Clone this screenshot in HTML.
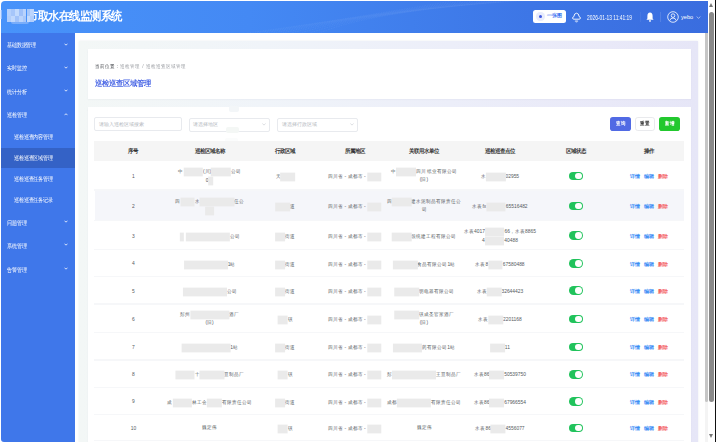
<!DOCTYPE html>
<html><head><meta charset="utf-8">
<style>
*{box-sizing:border-box;margin:0;padding:0}
html,body{width:716px;height:442px;overflow:hidden;background:#fff;font-family:"Liberation Sans",sans-serif}
.a{position:absolute}
#hdr{left:1px;top:1px;width:706.9px;height:31.5px;border-top-left-radius:4px;background:linear-gradient(90deg,#4893fa 0%,#4489f4 35%,#3d76e6 75%,#3a6ddf 100%)}
#title{left:27.3px;top:9.4px;font-size:11px;letter-spacing:-0.5px;transform:scaleY(1.06);transform-origin:0 50%;font-weight:bold;color:#fff;white-space:nowrap}
#side{left:0.7px;top:32.5px;width:73.9px;height:409.5px;background:#3f77ea;border-bottom-left-radius:3px}
.mi{position:absolute;left:7px;font-size:4.9px;color:#fff;white-space:nowrap;line-height:6px;margin-top:0.5px;transform:scale(.97,1.15);transform-origin:0 50%}
.si{position:absolute;left:14.3px;font-size:4.9px;color:#fff;white-space:nowrap;line-height:6px;margin-top:0.5px;transform:scale(.97,1.15);transform-origin:0 50%}
.chev{position:absolute;left:64.5px;width:2.3px;height:2.3px;border-right:0.55px solid rgba(255,255,255,.9);border-bottom:0.55px solid rgba(255,255,255,.9);transform:rotate(45deg)}
.chevu{position:absolute;left:64.5px;width:2.3px;height:2.3px;border-left:0.55px solid rgba(255,255,255,.9);border-top:0.55px solid rgba(255,255,255,.9);transform:rotate(45deg)}
#outer{left:79px;top:41px;width:619px;height:410px;background:linear-gradient(90deg,#f3f7f6 0%,#f0f4f9 30%,#eceef9 60%,#e9e9f8 85%,#e6e6f7 100%);box-shadow:0 0 2px rgba(210,215,225,.45)}
.card{position:absolute;background:#fff;left:8.6px;width:603.4px;box-shadow:0 0.6px 1.5px rgba(120,120,160,.12)}
.th{position:absolute;font-size:5.3px;font-weight:bold;color:#333;white-space:nowrap;transform:translateX(-50%) scaleY(1.1);line-height:6px}
.td{position:absolute;font-size:4.9px;color:#555a60;white-space:nowrap;transform:translateX(-50%) scaleY(1.1);line-height:6px;text-align:center}
.sw{position:absolute;left:568.6px;width:14.3px;height:8.8px;border-radius:5px;background:#21c35c}
.sw::after{content:"";position:absolute;right:1px;top:1px;width:6.8px;height:6.8px;border-radius:50%;background:#fff}
.act{position:absolute;font-size:5.2px;font-weight:bold;white-space:nowrap;line-height:6px;margin-top:0.8px}
.line{position:absolute;left:94.3px;width:589.4px;height:1.4px;background:#f6f7f9}
.btx{top:121.3px;font-size:4.9px;font-weight:bold;white-space:nowrap;line-height:6px;transform:scaleY(1.12);transform-origin:0 50%}
.blk{display:inline-block;background:#eaeaea;height:8px;vertical-align:middle;filter:blur(0.6px)}
</style></head><body>
<div id="hdr" class="a"></div>
<svg class="a" style="left:0;top:1px" width="707" height="31.5" viewBox="0 1 707 31.5"><g fill="none" stroke="rgba(255,255,255,.07)" stroke-width="0.7" stroke-dasharray="0.7 1.9" stroke-linecap="round"><path d="M240.0 34 Q330.0 22.0 470.0 -2"/><path d="M249.6 34 Q336.4 20.1 482.8 -2"/><path d="M259.2 34 Q342.8 18.2 495.6 -2"/><path d="M268.8 34 Q349.2 16.2 508.4 -2"/><path d="M278.4 34 Q355.6 14.3 521.2 -2"/><path d="M288.0 34 Q362.0 12.4 534.0 -2"/><path d="M297.6 34 Q368.4 10.5 546.8 -2"/><path d="M307.2 34 Q374.8 8.6 559.6 -2"/><path d="M316.8 34 Q381.2 6.6 572.4 -2"/></g></svg>
<div id="title" class="a">市取水在线监测系统</div>
<div class="a" style="left:0;top:0;width:60px;height:32px;filter:blur(0.45px)"><div class="a" style="left:7.20px;top:9.4px;width:3.86px;height:6.2px;background:#b4d0fc"></div><div class="a" style="left:7.20px;top:15.6px;width:3.86px;height:6.2px;background:#b0cdfb"></div><div class="a" style="left:11.06px;top:9.4px;width:3.86px;height:6.2px;background:#a6c6fa"></div><div class="a" style="left:11.06px;top:15.6px;width:3.86px;height:6.2px;background:#c0d8fd"></div><div class="a" style="left:14.92px;top:9.4px;width:3.86px;height:6.2px;background:#c2dafd"></div><div class="a" style="left:14.92px;top:15.6px;width:3.86px;height:6.2px;background:#a2c3f9"></div><div class="a" style="left:18.78px;top:9.4px;width:3.86px;height:6.2px;background:#9ec0f9"></div><div class="a" style="left:18.78px;top:15.6px;width:3.86px;height:6.2px;background:#bad4fc"></div><div class="a" style="left:22.64px;top:9.4px;width:3.86px;height:6.2px;background:#b9d3fc"></div><div class="a" style="left:22.64px;top:15.6px;width:3.86px;height:6.2px;background:#a9c8fa"></div><div class="a" style="left:26.50px;top:9.4px;width:3.86px;height:6.2px;background:#a8c8fa"></div><div class="a" style="left:26.50px;top:15.6px;width:3.86px;height:6.2px;background:#c4dbfd"></div><div class="a" style="left:30.36px;top:9.4px;width:3.86px;height:6.2px;background:#bcd5fd"></div><div class="a" style="left:30.36px;top:15.6px;width:3.86px;height:6.2px;background:#b2cefb"></div><div class="a" style="left:11px;top:21.5px;width:18px;height:2px;border-radius:0 0 9px 9px;background:rgba(170,200,250,.5)"></div></div>
<div class="a" style="left:0;top:10px;width:2px;height:9px;background:rgba(190,212,255,.6)"></div>

<!-- header right -->
<div class="a" style="left:533px;top:10px;width:32.6px;height:13px;background:#fff;border-radius:2.5px"></div>
<div class="a" style="left:536.3px;top:12.3px;width:8.4px;height:8.4px;border-radius:50%;background:#e8ecfc"></div>
<div class="a" style="left:538.8px;top:14.8px;width:3.4px;height:3.4px;border-radius:50%;background:#4058e0"></div>
<div class="a" style="left:547.4px;top:13px;font-size:4.9px;font-weight:bold;color:#3470f0;white-space:nowrap;line-height:6px">一张图</div>
<svg class="a" style="left:572px;top:12px" width="9" height="11" viewBox="0 0 9 11"><path d="M1.8 7.2 Q0.6 7.2 0.6 6 Q0.6 4.9 1.8 4.7 Q2.2 1.2 4.5 1.2 Q6.8 1.2 7.2 4.7 Q8.4 4.9 8.4 6 Q8.4 7.2 7.2 7.2 Z" fill="none" stroke="#fff" stroke-width="0.9"/><path d="M3.4 8.3 v1.8 M4.5 8.3 v2.2 M5.6 8.3 v1.8" stroke="#fff" stroke-width="0.55"/></svg>
<div class="a" style="left:586.7px;top:14px;font-size:7.4px;color:#fff;white-space:nowrap;line-height:8px;transform:scaleX(.66);transform-origin:0 0">2026-01-13 11:41:19</div>
<div class="a" style="left:640px;top:12px;width:0.6px;height:10px;background:rgba(255,255,255,.06)"></div>
<svg class="a" style="left:645.5px;top:12px" width="8" height="10" viewBox="0 0 8 10"><path d="M4 0.6 Q6.6 0.8 6.6 4 L6.6 6.6 L7.6 7.8 L0.4 7.8 L1.4 6.6 L1.4 4 Q1.4 0.8 4 0.6 Z" fill="#fff"/><circle cx="4" cy="8.9" r="0.9" fill="#fff"/></svg>
<div class="a" style="left:660px;top:12px;width:0.6px;height:10px;background:rgba(255,255,255,.13)"></div>
<svg class="a" style="left:666.5px;top:11px" width="12" height="12" viewBox="0 0 12 12"><circle cx="6" cy="6" r="5.3" fill="none" stroke="#fff" stroke-width="0.8"/><circle cx="6" cy="4.6" r="1.8" fill="none" stroke="#fff" stroke-width="0.8"/><path d="M2.8 9.6 Q3.4 7 6 7 Q8.6 7 9.2 9.6" fill="none" stroke="#fff" stroke-width="0.8"/></svg>
<div class="a" style="left:681px;top:14px;font-size:5.6px;color:#fff;white-space:nowrap;line-height:7px">yebo</div>
<svg class="a" style="left:696px;top:15.5px" width="5" height="3" viewBox="0 0 5 3"><polyline points="0.6,0.6 2.5,2.3 4.4,0.6" fill="none" stroke="rgba(255,255,255,.85)" stroke-width="0.6"/></svg>

<!-- scrollbars -->
<div class="a" style="left:704.6px;top:32.5px;width:3.5px;height:409.5px;background:#f4f4f4"></div>
<div class="a" style="left:704.6px;top:32.5px;width:3.5px;height:369px;background:#c6c6c6;border-radius:0 0 1.5px 1.5px"></div>
<div class="a" style="left:708px;top:0;width:8px;height:442px;background:#fff"></div>
<div class="a" style="left:709.2px;top:11.9px;width:5.2px;height:390.6px;background:#8a8a8a;border-radius:2.6px"></div>
<div class="a" style="left:709.3px;top:3.2px;width:0;height:0;border-left:2.6px solid transparent;border-right:2.6px solid transparent;border-bottom:4.4px solid #777"></div>
<div class="a" style="left:709.3px;top:434.3px;width:0;height:0;border-left:2.6px solid transparent;border-right:2.6px solid transparent;border-top:4.4px solid #777"></div>
<div class="a" style="left:715.2px;top:0;width:0.8px;height:442px;background:#111"></div>
<!-- sidebar -->
<div id="side" class="a">
</div>
<div class="a" style="left:0.7px;top:147.8px;width:73.9px;height:20.3px;background:#3462c6"></div>
<div class="mi" style="top:42.5px">基础数据管理</div><svg class="a" style="left:64.3px;top:42.5px" width="4" height="3" viewBox="0 0 4 3"><polyline points="0.5,0.7 2,2.2 3.5,0.7" fill="none" stroke="#fff" stroke-width="0.8"/></svg>
<div class="mi" style="top:65.6px">实时监控</div><svg class="a" style="left:64.3px;top:65.9px" width="4" height="3" viewBox="0 0 4 3"><polyline points="0.5,0.7 2,2.2 3.5,0.7" fill="none" stroke="#fff" stroke-width="0.8"/></svg>
<div class="mi" style="top:89.5px">统计分析</div><svg class="a" style="left:64.3px;top:89.3px" width="4" height="3" viewBox="0 0 4 3"><polyline points="0.5,0.7 2,2.2 3.5,0.7" fill="none" stroke="#fff" stroke-width="0.8"/></svg>
<div class="mi" style="top:112.8px">巡检管理</div><svg class="a" style="left:64.3px;top:113.3px" width="4" height="3" viewBox="0 0 4 3"><polyline points="0.5,2.2 2,0.7 3.5,2.2" fill="none" stroke="#fff" stroke-width="0.8"/></svg>
<div class="si" style="top:134.4px">巡检巡查内容管理</div>
<div class="si" style="top:155.4px">巡检巡查区域管理</div>
<div class="si" style="top:176.4px">巡检巡查任务管理</div>
<div class="si" style="top:197.4px">巡检巡查任务记录</div>
<div class="mi" style="top:220.5px">问题管理</div><svg class="a" style="left:64.3px;top:220.0px" width="4" height="3" viewBox="0 0 4 3"><polyline points="0.5,0.7 2,2.2 3.5,0.7" fill="none" stroke="#fff" stroke-width="0.8"/></svg>
<div class="mi" style="top:243.4px">系统管理</div><svg class="a" style="left:64.3px;top:243.4px" width="4" height="3" viewBox="0 0 4 3"><polyline points="0.5,0.7 2,2.2 3.5,0.7" fill="none" stroke="#fff" stroke-width="0.8"/></svg>
<div class="mi" style="top:267.3px">告警管理</div><svg class="a" style="left:64.3px;top:266.8px" width="4" height="3" viewBox="0 0 4 3"><polyline points="0.5,0.7 2,2.2 3.5,0.7" fill="none" stroke="#fff" stroke-width="0.8"/></svg>

<!-- content -->
<div id="outer" class="a">
  <div class="card" style="top:8.4px;height:49.2px"></div>
  <div class="card" style="top:66.2px;height:400px"></div>
</div>

<div class="a" style="left:95px;top:63.5px;font-size:4.83px;color:#4a4d52;white-space:nowrap;line-height:6px;transform:scale(1,1.12);transform-origin:0 50%">当前位置：<span style="color:#9a9da2">巡检管理 <span style="margin:0 0.9px">/</span> 巡检巡查区域管理</span></div>
<div class="a" style="left:95px;top:79.6px;font-size:6.95px;font-weight:bold;color:#4e6ae6;white-space:nowrap;line-height:8px;transform:scaleY(1.1);transform-origin:0 50%">巡检巡查区域管理</div>

<!-- filters -->
<div class="a" style="left:94.3px;top:117.4px;width:87.6px;height:14px;border:0.6px solid #e8eaee;border-radius:2px"></div>
<div class="a" style="left:98.7px;top:122.1px;font-size:4.9px;color:#b4b7bd;white-space:nowrap;line-height:6px">请输入巡检区域搜索</div>
<div class="a" style="left:189.2px;top:117.5px;width:80.8px;height:14px;border:0.6px solid #e8eaee;border-radius:2px"></div>
<div class="a" style="left:193px;top:122.1px;font-size:4.9px;color:#b4b7bd;white-space:nowrap;line-height:6px">请选择地区</div>
<svg class="a" style="left:261.8px;top:123px" width="4" height="3" viewBox="0 0 4 3"><polyline points="0.4,0.6 2,2.1 3.6,0.6" fill="none" stroke="#b8bcc4" stroke-width="0.5"/></svg>
<div class="a" style="left:277.2px;top:117.5px;width:81px;height:14px;border:0.6px solid #e8eaee;border-radius:2px"></div>
<div class="a" style="left:281.5px;top:122.1px;font-size:4.9px;color:#b4b7bd;white-space:nowrap;line-height:6px">请选择行政区域</div>
<svg class="a" style="left:350.3px;top:123px" width="4" height="3" viewBox="0 0 4 3"><polyline points="0.4,0.6 2,2.1 3.6,0.6" fill="none" stroke="#b8bcc4" stroke-width="0.5"/></svg>
<div class="a" style="left:228.7px;top:105.5px;width:10px;height:6.5px;background:#f3f6f8;border-radius:2px;filter:blur(0.6px)"></div>
<div class="a" style="left:228px;top:117.1px;width:10.5px;height:1.3px;background:#fff"></div>
<div class="a" style="left:226.4px;top:127px;width:12.4px;height:6px;background:#f4f7f5;border-radius:2px;filter:blur(0.6px)"></div>
<div class="a" style="left:225px;top:138px;width:12.7px;height:4.5px;background:#fbfcfc;border-radius:2px;filter:blur(0.5px)"></div>

<div class="a" style="left:610.1px;top:117.4px;width:20.7px;height:13.6px;background:#516ae4;border-radius:2.8px"></div>
<div class="a btx" style="left:615.5px;color:#fff">查询</div>
<div class="a" style="left:634.7px;top:117.4px;width:20.5px;height:13.6px;background:#fff;border:0.6px solid #e9eaed;border-radius:2.8px"></div>
<div class="a btx" style="left:640px;color:#444">重置</div>
<div class="a" style="left:659.1px;top:117.4px;width:20.7px;height:13.6px;background:#22c82e;border-radius:2.8px"></div>
<div class="a btx" style="left:664.5px;color:#fff">新增</div>

<!-- table -->
<div class="a" style="left:94.3px;top:140.6px;width:589.4px;height:20.1px;background:#f5f5f5"></div>
<div class="th" style="left:133.4px;top:148.2px">序号</div>
<div class="th" style="left:209.6px;top:148.2px">巡检区域名称</div>
<div class="th" style="left:285.4px;top:148.2px">行政区域</div>
<div class="th" style="left:354.9px;top:148.2px">所属地区</div>
<div class="th" style="left:424px;top:148.2px">关联用水单位</div>
<div class="th" style="left:500px;top:148.2px">巡检巡查点位</div>
<div class="th" style="left:576px;top:148.2px">区域状态</div>
<div class="th" style="left:648.6px;top:148.2px">操作</div>

<div class="a" style="left:94.5px;top:190.6px;width:589.2px;height:30.2px;background:#f5f6fa"></div>
<!--ROWS--><div class="td" style="left:133.4px;top:173.8px">1</div>
<div class="td" style="left:209.6px;top:167.9px">中<span class="blk" style="width:19.6px"></span>(川)<span class="blk" style="width:19.6px"></span>公司</div><div class="td" style="left:209.6px;top:177.4px">0<span class="blk" style="width:4.9px"></span></div>
<div class="td" style="left:285.4px;top:173.2px">天<span class="blk" style="width:14.7px"></span></div>
<div class="td" style="left:354.9px;top:173.2px">四川省 - 成都市 - <span class="blk" style="width:14.7px"></span></div>
<div class="td" style="left:424.0px;top:167.9px">中<span class="blk" style="width:19.6px"></span>四川 纸业有限公司</div><div class="td" style="left:424.0px;top:177.4px">(旧)</div>
<div class="td" style="left:500.0px;top:173.2px">水<span class="blk" style="width:19.6px"></span>02955</div>
<div class="sw" style="top:171.7px"></div>
<div class="act" style="left:630.2px;top:172.3px;color:#3b8cf5">详情</div><div class="act" style="left:643.9px;top:172.3px;color:#3b8cf5">编辑</div><div class="act" style="left:657.5px;top:172.3px;color:#f36464">删除</div>
<div class="line" style="top:189.3px"></div>
<div class="td" style="left:133.4px;top:203.7px">2</div>
<div class="td" style="left:209.6px;top:197.9px">四<span class="blk" style="width:14.7px"></span>水<span class="blk" style="width:34.3px"></span>任公</div><div class="td" style="left:209.6px;top:207.4px"><span class="blk" style="width:9.8px"></span></div>
<div class="td" style="left:285.4px;top:203.1px"><span class="blk" style="width:14.7px"></span>道</div>
<div class="td" style="left:354.9px;top:203.1px">四川省 - 成都市 - <span class="blk" style="width:14.7px"></span></div>
<div class="td" style="left:424.0px;top:197.9px">四<span class="blk" style="width:19.6px"></span>建水泥制品有限责任公</div><div class="td" style="left:424.0px;top:207.4px">司</div>
<div class="td" style="left:500.0px;top:203.1px">水表fx<span class="blk" style="width:19.6px"></span>65516482</div>
<div class="sw" style="top:201.6px"></div>
<div class="act" style="left:630.2px;top:202.3px;color:#3b8cf5">详情</div><div class="act" style="left:643.9px;top:202.3px;color:#3b8cf5">编辑</div><div class="act" style="left:657.5px;top:202.3px;color:#f36464">删除</div>
<div class="line" style="top:219.9px"></div>
<div class="td" style="left:133.4px;top:233.5px">3</div>
<div class="td" style="left:209.6px;top:232.9px"><span class="blk" style="width:4.9px"></span> <span class="blk" style="width:44.1px"></span>公司</div>
<div class="td" style="left:285.4px;top:232.9px"><span class="blk" style="width:9.8px"></span>街道</div>
<div class="td" style="left:354.9px;top:232.9px">四川省 - 成都市 - <span class="blk" style="width:14.7px"></span></div>
<div class="td" style="left:424.0px;top:232.9px"><span class="blk" style="width:19.6px"></span>领统建工程有限公司</div>
<div class="td" style="left:500.0px;top:227.7px">水表4017<span class="blk" style="width:19.6px"></span>66，水表8865</div><div class="td" style="left:500.0px;top:237.2px">4<span class="blk" style="width:19.6px"></span>40488</div>
<div class="sw" style="top:231.4px"></div>
<div class="act" style="left:630.2px;top:232.1px;color:#3b8cf5">详情</div><div class="act" style="left:643.9px;top:232.1px;color:#3b8cf5">编辑</div><div class="act" style="left:657.5px;top:232.1px;color:#f36464">删除</div>
<div class="line" style="top:248.9px"></div>
<div class="td" style="left:133.4px;top:261.3px">4</div>
<div class="td" style="left:209.6px;top:260.7px"><span class="blk" style="width:44.1px"></span>1站</div>
<div class="td" style="left:285.4px;top:260.7px"><span class="blk" style="width:9.8px"></span>街道</div>
<div class="td" style="left:354.9px;top:260.7px">四川省 - 成都市 - <span class="blk" style="width:14.7px"></span></div>
<div class="td" style="left:424.0px;top:260.7px"><span class="blk" style="width:24.5px"></span>食品有限公司1站</div>
<div class="td" style="left:500.0px;top:260.7px">水表8<span class="blk" style="width:14.7px"></span>67580488</div>
<div class="sw" style="top:259.2px"></div>
<div class="act" style="left:630.2px;top:259.9px;color:#3b8cf5">详情</div><div class="act" style="left:643.9px;top:259.9px;color:#3b8cf5">编辑</div><div class="act" style="left:657.5px;top:259.9px;color:#f36464">删除</div>
<div class="line" style="top:275.5px"></div>
<div class="td" style="left:133.4px;top:288.5px">5</div>
<div class="td" style="left:209.6px;top:287.9px"><span class="blk" style="width:44.1px"></span>公司</div>
<div class="td" style="left:285.4px;top:287.9px"><span class="blk" style="width:9.8px"></span>街道</div>
<div class="td" style="left:354.9px;top:287.9px">四川省 - 成都市 - <span class="blk" style="width:14.7px"></span></div>
<div class="td" style="left:424.0px;top:287.9px"><span class="blk" style="width:24.5px"></span>明电器有限公司</div>
<div class="td" style="left:500.0px;top:287.9px">水表<span class="blk" style="width:14.7px"></span>32644423</div>
<div class="sw" style="top:286.4px"></div>
<div class="act" style="left:630.2px;top:287.1px;color:#3b8cf5">详情</div><div class="act" style="left:643.9px;top:287.1px;color:#3b8cf5">编辑</div><div class="act" style="left:657.5px;top:287.1px;color:#f36464">删除</div>
<div class="line" style="top:303.3px"></div>
<div class="td" style="left:133.4px;top:316.8px">6</div>
<div class="td" style="left:209.6px;top:310.9px">彭州<span class="blk" style="width:39.2px"></span>酒厂</div><div class="td" style="left:209.6px;top:320.4px">(旧)</div>
<div class="td" style="left:285.4px;top:316.2px"><span class="blk" style="width:9.8px"></span>镇</div>
<div class="td" style="left:354.9px;top:316.2px">四川省 - 成都市 - <span class="blk" style="width:14.7px"></span></div>
<div class="td" style="left:424.0px;top:310.9px"><span class="blk" style="width:24.5px"></span>镇成圣官家酒厂</div><div class="td" style="left:424.0px;top:320.4px">(旧)</div>
<div class="td" style="left:500.0px;top:316.2px">水表<span class="blk" style="width:14.7px"></span>2201168</div>
<div class="sw" style="top:314.7px"></div>
<div class="act" style="left:630.2px;top:315.4px;color:#3b8cf5">详情</div><div class="act" style="left:643.9px;top:315.4px;color:#3b8cf5">编辑</div><div class="act" style="left:657.5px;top:315.4px;color:#f36464">删除</div>
<div class="line" style="top:332.1px"></div>
<div class="td" style="left:133.4px;top:344.8px">7</div>
<div class="td" style="left:209.6px;top:344.2px"><span class="blk" style="width:49.0px"></span>1站</div>
<div class="td" style="left:285.4px;top:344.2px"><span class="blk" style="width:9.8px"></span>街道</div>
<div class="td" style="left:354.9px;top:344.2px">四川省 - 成都市 - <span class="blk" style="width:14.7px"></span></div>
<div class="td" style="left:424.0px;top:344.2px"><span class="blk" style="width:29.4px"></span>药有限公司1站</div>
<div class="td" style="left:500.0px;top:344.2px"><span class="blk" style="width:14.7px"></span>11</div>
<div class="sw" style="top:342.7px"></div>
<div class="act" style="left:630.2px;top:343.4px;color:#3b8cf5">详情</div><div class="act" style="left:643.9px;top:343.4px;color:#3b8cf5">编辑</div><div class="act" style="left:657.5px;top:343.4px;color:#f36464">删除</div>
<div class="line" style="top:359.3px"></div>
<div class="td" style="left:133.4px;top:372.0px">8</div>
<div class="td" style="left:209.6px;top:371.4px"><span class="blk" style="width:19.6px"></span>十<span class="blk" style="width:24.5px"></span>豆制品厂</div>
<div class="td" style="left:285.4px;top:371.4px"><span class="blk" style="width:9.8px"></span>镇</div>
<div class="td" style="left:354.9px;top:371.4px">四川省 - 成都市 - <span class="blk" style="width:14.7px"></span></div>
<div class="td" style="left:424.0px;top:371.4px">彭<span class="blk" style="width:44.1px"></span>王豆制品厂</div>
<div class="td" style="left:500.0px;top:371.4px">水表86<span class="blk" style="width:14.7px"></span>50539750</div>
<div class="sw" style="top:369.9px"></div>
<div class="act" style="left:630.2px;top:370.6px;color:#3b8cf5">详情</div><div class="act" style="left:643.9px;top:370.6px;color:#3b8cf5">编辑</div><div class="act" style="left:657.5px;top:370.6px;color:#f36464">删除</div>
<div class="line" style="top:386.5px"></div>
<div class="td" style="left:133.4px;top:399.2px">9</div>
<div class="td" style="left:209.6px;top:398.6px">成<span class="blk" style="width:19.6px"></span>林工会<span class="blk" style="width:14.7px"></span>有限责任公司</div>
<div class="td" style="left:285.4px;top:398.6px"><span class="blk" style="width:9.8px"></span>街道</div>
<div class="td" style="left:354.9px;top:398.6px">四川省 - 成都市 - <span class="blk" style="width:14.7px"></span></div>
<div class="td" style="left:424.0px;top:398.6px">成都<span class="blk" style="width:34.3px"></span>有限责任公司</div>
<div class="td" style="left:500.0px;top:398.6px">水表86<span class="blk" style="width:14.7px"></span>67966554</div>
<div class="sw" style="top:397.1px"></div>
<div class="act" style="left:630.2px;top:397.8px;color:#3b8cf5">详情</div><div class="act" style="left:643.9px;top:397.8px;color:#3b8cf5">编辑</div><div class="act" style="left:657.5px;top:397.8px;color:#f36464">删除</div>
<div class="line" style="top:413.7px"></div>
<div class="td" style="left:133.4px;top:425.8px">10</div>
<div class="td" style="left:209.6px;top:425.2px">魏定伟</div>
<div class="td" style="left:285.4px;top:425.2px"><span class="blk" style="width:9.8px"></span>镇</div>
<div class="td" style="left:354.9px;top:425.2px">四川省 - 成都市 - <span class="blk" style="width:14.7px"></span></div>
<div class="td" style="left:424.0px;top:425.2px">魏定伟</div>
<div class="td" style="left:500.0px;top:425.2px">水表86<span class="blk" style="width:14.7px"></span>4556077</div>
<div class="sw" style="top:423.7px"></div>
<div class="act" style="left:630.2px;top:424.4px;color:#3b8cf5">详情</div><div class="act" style="left:643.9px;top:424.4px;color:#3b8cf5">编辑</div><div class="act" style="left:657.5px;top:424.4px;color:#f36464">删除</div>
<div class="line" style="top:439.7px"></div><!--/ROWS-->
</body></html>
